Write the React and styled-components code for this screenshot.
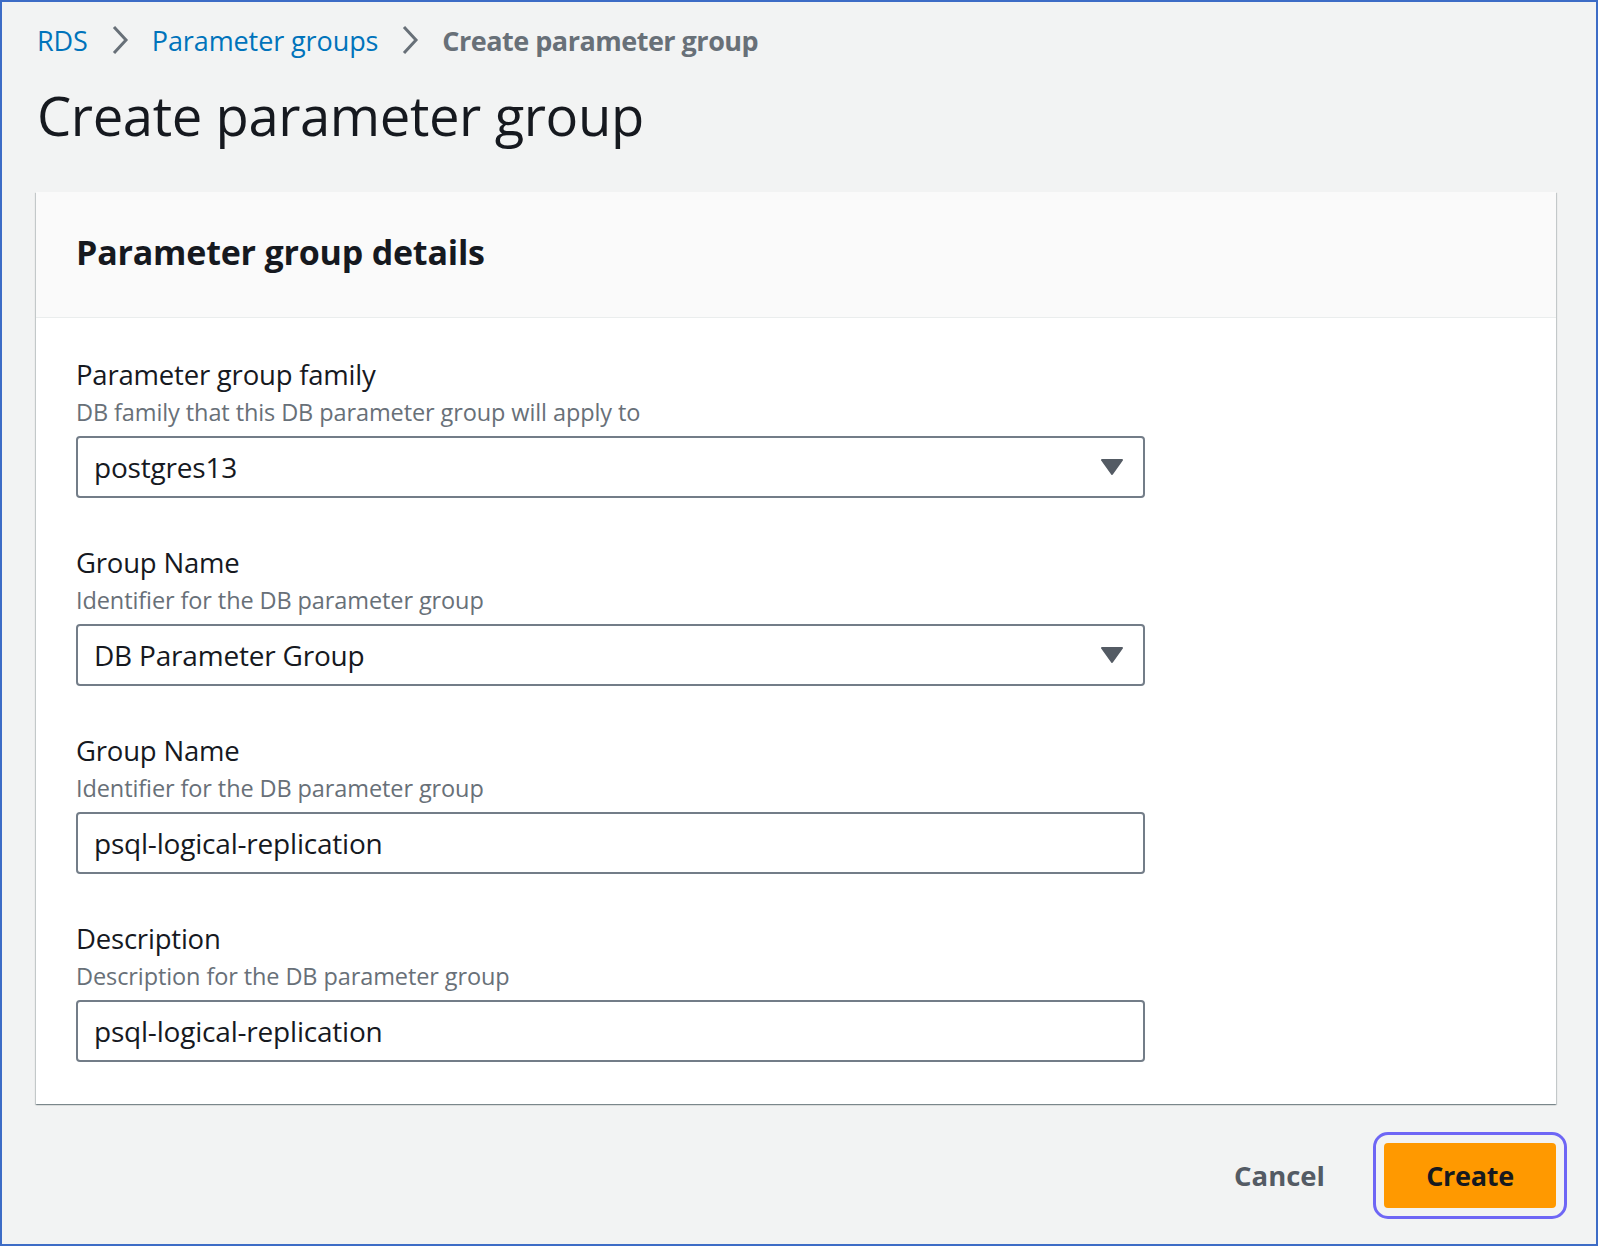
import React from "react";
import styled, { createGlobalStyle } from "styled-components";

const Global = createGlobalStyle`
  html, body {
    margin: 0;
    padding: 0;
    background: #f2f3f3;
  }
  body {
    font-family: "Open Sans", "Noto Sans", sans-serif;
    color: #16191f;
  }
`;

const Page = styled.div`
  box-sizing: border-box;
  width: 1598px;
  height: 1246px;
  border: 2px solid #3d6cc6;
  background: #f2f3f3;
  padding: 20px 40px 0 34px;
`;

const Crumbs = styled.nav`
  display: flex;
  align-items: center;
  height: 36px;
  font-size: 27px;
  padding-left: 1px;
`;

const Crumb = styled.a`
  color: ${(p) => (p.$current ? "#687078" : "#0073bb")};
  font-weight: ${(p) => (p.$current ? 700 : 400)};
  text-decoration: none;
  letter-spacing: ${(p) => (p.$current ? "-0.5px" : "-0.1px")};
`;

const Sep = styled.span`
  display: flex;
  align-items: center;
  margin: 0 23px;
`;

const Title = styled.h1`
  margin: 25px 0 0 1px;
  font-size: 54.4px;
  line-height: 64px;
  font-weight: 400;
  letter-spacing: -0.4px;
  color: #16191f;
`;

const Panel = styled.section`
  margin-top: 45px;
  background: #ffffff;
  box-shadow: 0 1px 1px 0 rgba(0, 28, 36, 0.3), 1px 1px 1px 0 rgba(0, 28, 36, 0.15),
    -1px 1px 1px 0 rgba(0, 28, 36, 0.15);
`;

const PanelHeader = styled.header`
  height: 126px;
  display: flex;
  align-items: center;
  padding: 0 40px 6px;
  box-sizing: border-box;
  background: #fafafa;
  border-bottom: 1px solid #eaeded;
`;

const PanelTitle = styled.h2`
  margin: 0;
  font-size: 34px;
  font-weight: 700;
  letter-spacing: -0.2px;
`;

const PanelBody = styled.div`
  padding: 38px 40px 42px;
  display: flex;
  flex-direction: column;
  gap: 46px;
`;

const Field = styled.div`
  display: flex;
  flex-direction: column;
`;

const Label = styled.label`
  font-size: 27.5px;
  line-height: 38px;
  color: #16191f;
  letter-spacing: -0.2px;
`;

const Hint = styled.div`
  font-size: 23.5px;
  line-height: 36px;
  color: #687078;
  letter-spacing: -0.1px;
  margin-bottom: 6px;
`;

const Box = styled.div`
  box-sizing: border-box;
  width: 1069px;
  height: 62px;
  border: 2px solid #737d88;
  border-radius: 4px;
  background: #fff;
  display: flex;
  align-items: center;
  justify-content: space-between;
  padding: 0 20px 0 16px;
  font-size: 28px;
  color: #16191f;
  letter-spacing: -0.2px;
`;

const Footer = styled.div`
  display: flex;
  justify-content: flex-end;
  align-items: center;
  margin-top: 39px;
  gap: 40px;
`;

const LinkButton = styled.button`
  border: none;
  background: none;
  font-family: inherit;
  font-size: 27.5px;
  font-weight: 700;
  color: #545b64;
  padding: 0 19px;
  cursor: pointer;
`;

const PrimaryButton = styled.button`
  width: 172px;
  height: 65px;
  border: none;
  border-radius: 4px;
  background: #ff9900;
  color: #16191f;
  font-family: inherit;
  font-size: 27px;
  font-weight: 700;
  letter-spacing: -0.3px;
  outline: 3px solid #6e66f5;
  outline-offset: 8px;
  cursor: pointer;
`;

function Chevron() {
  return (
    <svg width="18" height="30" viewBox="0 0 18 30">
      <path d="M3 2 L15 15 L3 28" fill="none" stroke="#687078" strokeWidth="3" />
    </svg>
  );
}

function Caret() {
  return (
    <svg width="22" height="18" viewBox="0 0 22 18">
      <path d="M1 2 H21 L11 16 Z" fill="#545b64" stroke="#545b64" strokeWidth="2" strokeLinejoin="round" />
    </svg>
  );
}

const fields = [
  { label: "Parameter group family", hint: "DB family that this DB parameter group will apply to", value: "postgres13", select: true },
  { label: "Group Name", hint: "Identifier for the DB parameter group", value: "DB Parameter Group", select: true },
  { label: "Group Name", hint: "Identifier for the DB parameter group", value: "psql-logical-replication" },
  { label: "Description", hint: "Description for the DB parameter group", value: "psql-logical-replication" },
];

export default function App() {
  return (
    <>
      <Global />
      <Page>
        <Crumbs>
          <Crumb href="#">RDS</Crumb>
          <Sep>
            <Chevron />
          </Sep>
          <Crumb href="#">Parameter groups</Crumb>
          <Sep>
            <Chevron />
          </Sep>
          <Crumb $current>Create parameter group</Crumb>
        </Crumbs>
        <Title>Create parameter group</Title>
        <Panel>
          <PanelHeader>
            <PanelTitle>Parameter group details</PanelTitle>
          </PanelHeader>
          <PanelBody>
            {fields.map((f, i) => (
              <Field key={i}>
                <Label>{f.label}</Label>
                <Hint>{f.hint}</Hint>
                <Box>
                  <span>{f.value}</span>
                  {f.select && <Caret />}
                </Box>
              </Field>
            ))}
          </PanelBody>
        </Panel>
        <Footer>
          <LinkButton>Cancel</LinkButton>
          <PrimaryButton>Create</PrimaryButton>
        </Footer>
      </Page>
    </>
  );
}
